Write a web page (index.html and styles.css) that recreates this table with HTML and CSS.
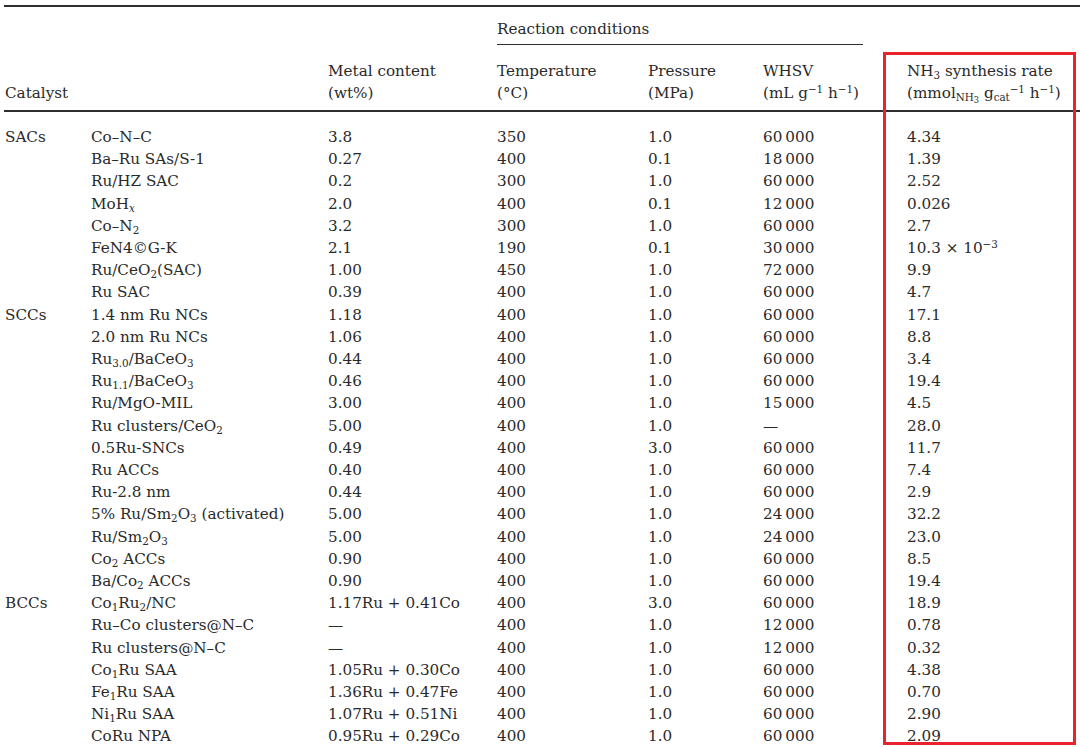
FILE: index.html
```html
<!DOCTYPE html>
<html>
<head>
<meta charset="utf-8">
<link rel="stylesheet" href="styles.css">
</head>
<body>
<div class="page">
<table class="tbl">
<colgroup>
<col class="c-group"><col class="c-name"><col class="c-metal"><col class="c-temp"><col class="c-press"><col class="c-whsv"><col class="c-rate">
</colgroup>
<thead>
<tr class="h1">
<th></th><th></th><th></th>
<th colspan="3"><div class="span-rule">Reaction conditions</div></th>
<th></th>
</tr>
<tr class="h2">
<th>Catalyst</th><th></th>
<th>Metal content<br>(wt%)</th>
<th>Temperature<br>(°C)</th>
<th>Pressure<br>(MPa)</th>
<th>WHSV<br>(mL g<sup>−1</sup> h<sup>−1</sup>)</th>
<th>NH<sub>3</sub> synthesis rate<br>(mmol<sub>NH<sub class="s2">3</sub></sub> g<sub>cat</sub><sup>−1</sup> h<sup>−1</sup>)</th>
</tr>
</thead>
<tbody>
<tr><td>SACs</td><td>Co–N–C</td><td>3.8</td><td>350</td><td>1.0</td><td>60&#8201;000</td><td>4.34</td></tr>
<tr><td></td><td>Ba–Ru SAs/S-1</td><td>0.27</td><td>400</td><td>0.1</td><td>18&#8201;000</td><td>1.39</td></tr>
<tr><td></td><td>Ru/HZ SAC</td><td>0.2</td><td>300</td><td>1.0</td><td>60&#8201;000</td><td>2.52</td></tr>
<tr><td></td><td>MoH<sub><i>x</i></sub></td><td>2.0</td><td>400</td><td>0.1</td><td>12&#8201;000</td><td>0.026</td></tr>
<tr><td></td><td>Co–N<sub>2</sub></td><td>3.2</td><td>300</td><td>1.0</td><td>60&#8201;000</td><td>2.7</td></tr>
<tr><td></td><td>FeN4©G-K</td><td>2.1</td><td>190</td><td>0.1</td><td>30&#8201;000</td><td>10.3 × 10<sup>−3</sup></td></tr>
<tr><td></td><td>Ru/CeO<sub>2</sub>(SAC)</td><td>1.00</td><td>450</td><td>1.0</td><td>72&#8201;000</td><td>9.9</td></tr>
<tr><td></td><td>Ru SAC</td><td>0.39</td><td>400</td><td>1.0</td><td>60&#8201;000</td><td>4.7</td></tr>
<tr><td>SCCs</td><td>1.4 nm Ru NCs</td><td>1.18</td><td>400</td><td>1.0</td><td>60&#8201;000</td><td>17.1</td></tr>
<tr><td></td><td>2.0 nm Ru NCs</td><td>1.06</td><td>400</td><td>1.0</td><td>60&#8201;000</td><td>8.8</td></tr>
<tr><td></td><td>Ru<sub>3.0</sub>/BaCeO<sub>3</sub></td><td>0.44</td><td>400</td><td>1.0</td><td>60&#8201;000</td><td>3.4</td></tr>
<tr><td></td><td>Ru<sub>1.1</sub>/BaCeO<sub>3</sub></td><td>0.46</td><td>400</td><td>1.0</td><td>60&#8201;000</td><td>19.4</td></tr>
<tr><td></td><td>Ru/MgO-MIL</td><td>3.00</td><td>400</td><td>1.0</td><td>15&#8201;000</td><td>4.5</td></tr>
<tr><td></td><td>Ru clusters/CeO<sub>2</sub></td><td>5.00</td><td>400</td><td>1.0</td><td>—</td><td>28.0</td></tr>
<tr><td></td><td>0.5Ru-SNCs</td><td>0.49</td><td>400</td><td>3.0</td><td>60&#8201;000</td><td>11.7</td></tr>
<tr><td></td><td>Ru ACCs</td><td>0.40</td><td>400</td><td>1.0</td><td>60&#8201;000</td><td>7.4</td></tr>
<tr><td></td><td>Ru-2.8 nm</td><td>0.44</td><td>400</td><td>1.0</td><td>60&#8201;000</td><td>2.9</td></tr>
<tr><td></td><td>5% Ru/Sm<sub>2</sub>O<sub>3</sub> (activated)</td><td>5.00</td><td>400</td><td>1.0</td><td>24&#8201;000</td><td>32.2</td></tr>
<tr><td></td><td>Ru/Sm<sub>2</sub>O<sub>3</sub></td><td>5.00</td><td>400</td><td>1.0</td><td>24&#8201;000</td><td>23.0</td></tr>
<tr><td></td><td>Co<sub>2</sub> ACCs</td><td>0.90</td><td>400</td><td>1.0</td><td>60&#8201;000</td><td>8.5</td></tr>
<tr><td></td><td>Ba/Co<sub>2</sub> ACCs</td><td>0.90</td><td>400</td><td>1.0</td><td>60&#8201;000</td><td>19.4</td></tr>
<tr><td>BCCs</td><td>Co<sub>1</sub>Ru<sub>2</sub>/NC</td><td>1.17Ru + 0.41Co</td><td>400</td><td>3.0</td><td>60&#8201;000</td><td>18.9</td></tr>
<tr><td></td><td>Ru–Co clusters@N–C</td><td>—</td><td>400</td><td>1.0</td><td>12&#8201;000</td><td>0.78</td></tr>
<tr><td></td><td>Ru clusters@N–C</td><td>—</td><td>400</td><td>1.0</td><td>12&#8201;000</td><td>0.32</td></tr>
<tr><td></td><td>Co<sub>1</sub>Ru SAA</td><td>1.05Ru + 0.30Co</td><td>400</td><td>1.0</td><td>60&#8201;000</td><td>4.38</td></tr>
<tr><td></td><td>Fe<sub>1</sub>Ru SAA</td><td>1.36Ru + 0.47Fe</td><td>400</td><td>1.0</td><td>60&#8201;000</td><td>0.70</td></tr>
<tr><td></td><td>Ni<sub>1</sub>Ru SAA</td><td>1.07Ru + 0.51Ni</td><td>400</td><td>1.0</td><td>60&#8201;000</td><td>2.90</td></tr>
<tr><td></td><td>CoRu NPA</td><td>0.95Ru + 0.29Co</td><td>400</td><td>1.0</td><td>60&#8201;000</td><td>2.09</td></tr>
</tbody>
</table>
<div class="highlight"></div>
</div>
</body>
</html>
```
FILE: styles.css
```css
html, body {
  margin: 0;
  padding: 0;
  background: #ffffff;
}
.page {
  position: relative;
  width: 1080px;
  height: 747px;
  overflow: hidden;
  padding: 5px 0 0 4px;
  box-sizing: border-box;
  font-family: "DejaVu Serif", "Liberation Serif", serif;
  font-size: 15.2px;
  color: #2a2a2a;
}
.tbl {
  width: 1076px;
  table-layout: fixed;
  border-collapse: separate;
  border-spacing: 0;
  border-top: 2px solid #2e2e2e;
}
.c-group { width: 87px; }
.c-name { width: 237px; }
.c-metal { width: 169px; }
.c-temp { width: 151px; }
.c-press { width: 115px; }
.c-whsv { width: 144px; }
.c-rate { width: 173px; }
.tbl th, .tbl td {
  padding: 0;
  text-align: left;
  vertical-align: bottom;
  font-weight: normal;
  white-space: nowrap;
}
.tbl th:first-child, .tbl td:first-child {
  padding-left: 1px;
}
.h1 th {
  padding-top: 11px;
  line-height: 22px;
}
.span-rule {
  margin-right: 44px;
  padding-bottom: 4px;
  border-bottom: 1.5px solid #2e2e2e;
}
.h2 th {
  padding-top: 15px;
  padding-bottom: 6px;
  line-height: 22px;
  border-bottom: 2px solid #2e2e2e;
}
.tbl td {
  line-height: 22.2px;
  height: 22.2px;
}
.tbl tbody tr:first-child td {
  padding-top: 14px;
}
sub, sup {
  font-size: 0.68em;
  line-height: 0;
}
sub {
  vertical-align: -0.25em;
}
sup {
  vertical-align: 0.5em;
}
sub .s2 {
  font-size: 0.8em;
  vertical-align: -0.2em;
}
.highlight {
  position: absolute;
  left: 883px;
  top: 52px;
  width: 193px;
  height: 693px;
  box-sizing: border-box;
  border: 3px solid #e8232b;
  pointer-events: none;
}
```
